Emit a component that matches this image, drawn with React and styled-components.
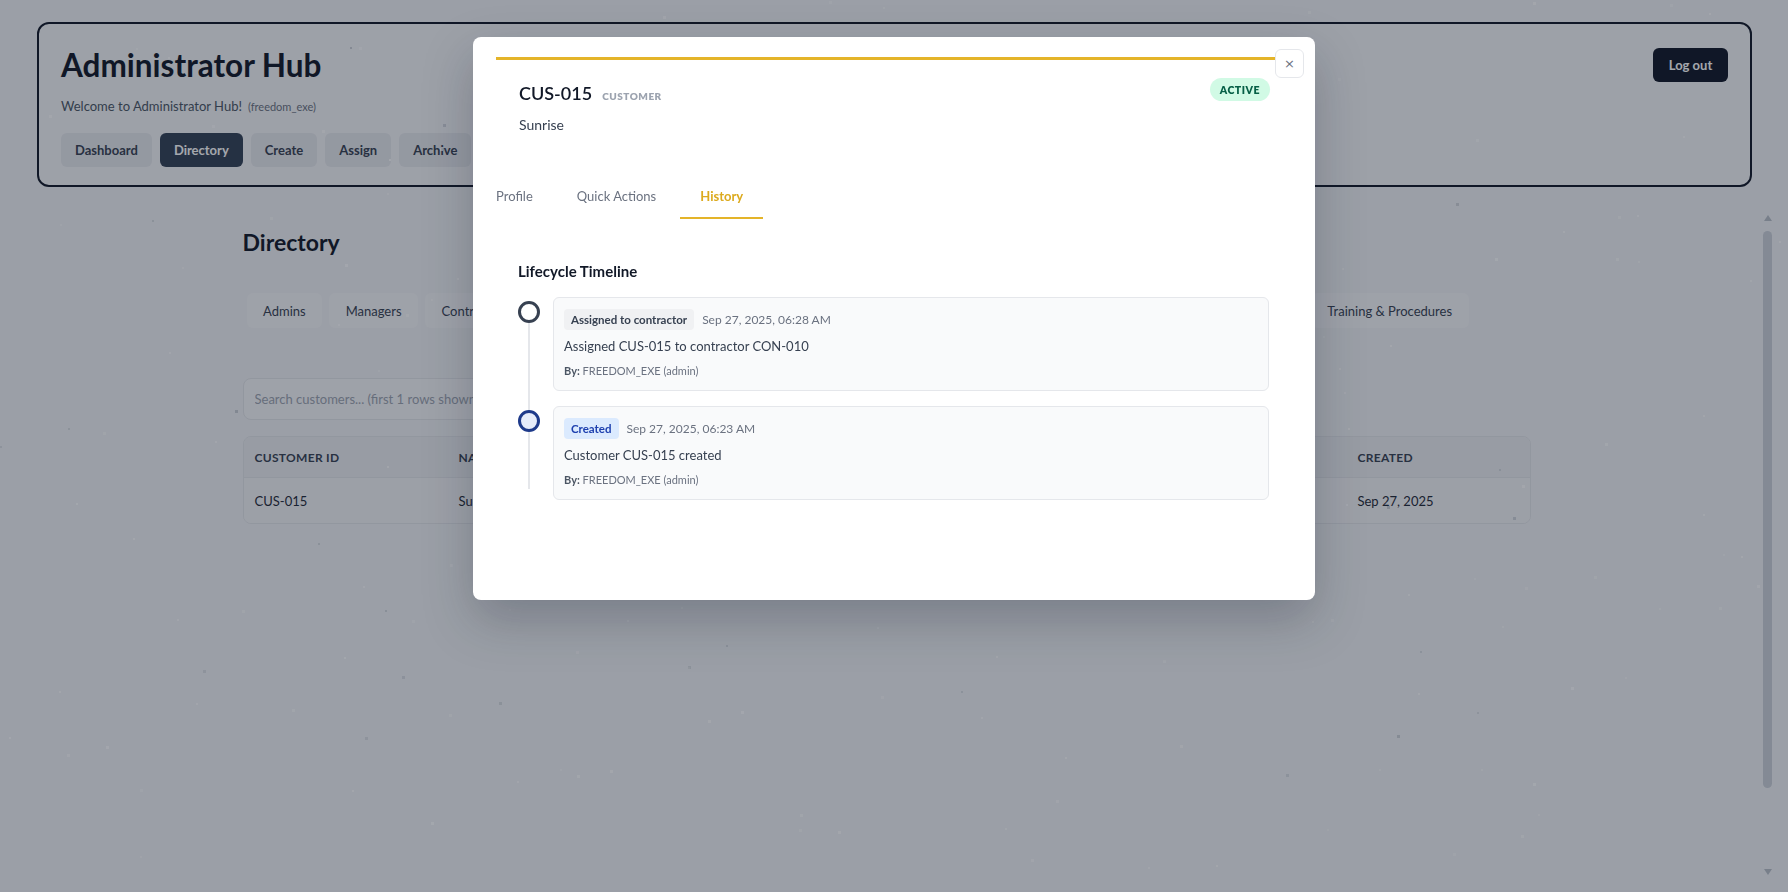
import React from "react";
import styled, { createGlobalStyle, css } from "styled-components";

const GlobalStyle = createGlobalStyle`
  html, body { margin: 0; padding: 0; height: 100%; overflow: hidden; }
  body { font-family: Lato, "Noto Sans", "Liberation Sans", sans-serif; color: #111827; }
  * { box-sizing: border-box; }
`;

/* ---------- page ---------- */
const Page = styled.div`
  height: 100vh;
  display: flex;
  flex-direction: column;
  background: #f1f3f5;
`;

const HeaderCard = styled.header`
  margin: 22px 36px 0 37px;
  border: 2px solid #111827;
  border-radius: 12px;
  padding: 23px 22px 18px 22px;
  display: flex;
  justify-content: space-between;
  align-items: flex-start;
  background: #f4f5f7;
`;

const HeaderLeft = styled.div`
  display: flex;
  flex-direction: column;
`;

const HubTitle = styled.h1`
  margin: 0;
  font-size: 31.5px;
  line-height: 36px;
  font-weight: 700;
  color: #111827;
`;

const Welcome = styled.p`
  margin: 13px 0 0;
  font-size: 13px;
  line-height: 20px;
  color: #4b5563;
`;

const UserTag = styled.span`
  font-size: 11px;
  color: #6b7280;
  margin-left: 6px;
`;

const NavRow = styled.nav`
  display: flex;
  gap: 8px;
  margin-top: 16px;
`;

const NavButton = styled.button`
  height: 34px;
  padding: 0 14px;
  border: none;
  border-radius: 6px;
  font-family: inherit;
  font-size: 13px;
  font-weight: 700;
  background: ${(p) => (p.$active ? "#334155" : "#e6e8ec")};
  color: ${(p) => (p.$active ? "#ffffff" : "#374151")};
`;

const LogoutButton = styled.button`
  height: 34px;
  width: 75px;
  margin-top: 1px;
  border: none;
  border-radius: 6px;
  background: #111827;
  color: #fff;
  font-family: inherit;
  font-size: 13px;
  font-weight: 700;
`;

const Main = styled.div`
  flex: 1;
  min-height: 0;
  margin: 24px 14px 12px 0;
  display: flex;
`;

const ScrollArea = styled.main`
  flex: 1;
  min-width: 0;
  padding-left: 12px;
  overflow: hidden;
`;

const ScrollRail = styled.div`
  width: 13px;
  display: flex;
  flex-direction: column;
  align-items: center;
`;

const RailArrow = styled.span`
  display: block;
  margin: ${(p) => (p.$down ? "auto 0 5px" : "4px 0 0")};
  width: 0;
  height: 0;
  border-left: 4.5px solid transparent;
  border-right: 4.5px solid transparent;
  ${(p) =>
    p.$down
      ? css`border-top: 6px solid #b9bec7;`
      : css`border-bottom: 6px solid #b9bec7;`}
`;

const RailThumb = styled.span`
  display: block;
  margin-top: 10px;
  width: 9px;
  height: 557px;
  border-radius: 5px;
  background: #cbd0d9;
`;

const Content = styled.div`
  max-width: 1288px;
  margin: 0 auto;
  padding-top: 15px;
`;

const SectionTitle = styled.h2`
  margin: 0;
  font-size: 23px;
  line-height: 32px;
  font-weight: 700;
  color: #111827;
`;

const FilterRow = styled.div`
  display: flex;
  gap: 7px;
  margin-top: 35px;
  padding-left: 4px;
`;

const FilterTab = styled.button`
  height: 35px;
  padding: 0 16.5px;
  border: none;
  border-radius: 6px;
  font-family: inherit;
  font-size: 13px;
  white-space: nowrap;
  background: ${(p) => (p.$active ? "#1f2937" : "#f6f7f9")};
  color: ${(p) => (p.$active ? "#fff" : "#374151")};
`;

const SearchInput = styled.input`
  display: block;
  margin-top: 50px;
  width: 560px;
  height: 42px;
  padding: 0 11px;
  border: 1px solid #e3e5e9;
  border-radius: 8px;
  background: #f6f7f9;
  font-family: inherit;
  font-size: 13px;
  &::placeholder { color: #9ca3af; }
`;

const Table = styled.div`
  margin-top: 16px;
  border: 1px solid #e3e5e9;
  border-radius: 8px;
  overflow: hidden;
`;

const TableRow = styled.div`
  display: grid;
  grid-template-columns: 204px 1fr 1fr 1fr 183px;
  align-items: center;
  height: ${(p) => (p.$head ? "40px" : "46px")};
  background: ${(p) => (p.$head ? "#eceef1" : "#f3f4f6")};
  border-top: ${(p) => (p.$head ? "none" : "1px solid #e3e5e9")};
`;

const Cell = styled.div`
  padding: 0 11px;
  ${(p) =>
    p.$head
      ? css`
          font-size: 12px;
          font-weight: 700;
          letter-spacing: 0.3px;
          text-transform: uppercase;
          color: #374151;
        `
      : css`
          font-size: 13px;
          color: #1f2937;
        `}
`;

/* ---------- particles ---------- */
const ParticleLayer = styled.svg`
  position: fixed;
  inset: 0;
  width: 100%;
  height: 100%;
  pointer-events: none;
`;

function makeParticles() {
  let s = 987654;
  const r = () => {
    s = (s * 1664525 + 1013904223) >>> 0;
    return s / 4294967296;
  };
  return Array.from({ length: 200 }, () => {
    const dark = r() < 0.16;
    return {
      x: Math.round(r() * 1788),
      y: Math.round(r() * 892),
      s: r() < 0.5 ? 2 : 3,
      c: dark ? "#475569" : "#ffffff",
      o: dark ? 0.12 + r() * 0.12 : 0.4 + r() * 0.5,
    };
  });
}
const particles = makeParticles();

/* ---------- modal ---------- */
const Overlay = styled.div`
  position: fixed;
  inset: 0;
  background: rgba(17, 24, 39, 0.38);
  display: flex;
  justify-content: center;
  align-items: flex-start;
  padding-top: 37px;
`;

const Modal = styled.div`
  position: relative;
  width: 842px;
  min-height: 559px;
  background: #fff;
  border-radius: 8px;
  padding: 20px 24px 20px 23px;
  box-shadow: 0 20px 50px rgba(15, 23, 42, 0.25);
`;

const CloseButton = styled.button`
  position: absolute;
  top: 12px;
  right: 11px;
  width: 29px;
  height: 29px;
  border: 1px solid #e5e7eb;
  border-radius: 6px;
  background: #fff;
  color: #6b7280;
  font-family: "DejaVu Sans", sans-serif;
  font-size: 13px;
  line-height: 1;
  display: flex;
  align-items: center;
  justify-content: center;
  padding: 0;
`;

const EntityHeader = styled.div`
  border-top: 3px solid #e4b429;
  padding: 18px 21px 20px 23px;
  display: flex;
  justify-content: space-between;
  align-items: flex-start;
`;

const EntityInfo = styled.div`
  padding-top: 3px;
`;

const EntityTitleRow = styled.div`
  display: flex;
  align-items: baseline;
  gap: 10px;
`;

const EntityId = styled.span`
  font-size: 18px;
  line-height: 24px;
  font-weight: 600;
  color: #111827;
`;

const EntityType = styled.span`
  font-size: 10px;
  font-weight: 800;
  letter-spacing: 0.5px;
  color: #9ca3af;
`;

const EntityName = styled.div`
  margin-top: 10px;
  font-size: 14px;
  line-height: 20px;
  color: #374151;
`;

const StatusPill = styled.span`
  display: inline-flex;
  align-items: center;
  height: 23px;
  padding: 0 10px;
  border-radius: 999px;
  background: #d1fae5;
  color: #065f46;
  font-size: 10.5px;
  font-weight: 800;
  letter-spacing: 0.5px;
`;

const Tabs = styled.div`
  display: flex;
  gap: 4px;
  margin: 21px 0 0 -20px;
`;

const Tab = styled.button`
  padding: 10px 20px 11px;
  border: none;
  border-bottom: 2px solid ${(p) => (p.$active ? "#e4b429" : "transparent")};
  background: none;
  font-family: inherit;
  font-size: 13px;
  line-height: 20px;
  font-weight: ${(p) => (p.$active ? 700 : 400)};
  color: ${(p) => (p.$active ? "#dcaa1e" : "#6b7280")};
`;

const Panel = styled.section`
  padding: 41px 22px 80px 22px;
`;

const PanelTitle = styled.h3`
  margin: 0 0 15px;
  font-size: 15px;
  line-height: 22px;
  font-weight: 700;
  color: #111827;
`;

const Timeline = styled.div`
  position: relative;
  display: flex;
  flex-direction: column;
  gap: 15px;
  &::before {
    content: "";
    position: absolute;
    left: 10px;
    top: 26px;
    bottom: 11px;
    width: 2px;
    background: #e5e7eb;
  }
`;

const TimelineItem = styled.div`
  display: grid;
  grid-template-columns: 22px 1fr;
  column-gap: 13px;
  align-items: start;
`;

const Dot = styled.span`
  position: relative;
  margin-top: 4px;
  width: 22px;
  height: 22px;
  border-radius: 50%;
  border: 3px solid ${(p) => (p.$tone === "blue" ? "#1e3a8a" : "#374151")};
  background: ${(p) => (p.$tone === "blue" ? "#e6ecfa" : "#ffffff")};
`;

const EventCard = styled.div`
  background: #f9fafb;
  border: 1px solid #e5e7eb;
  border-radius: 6px;
  padding: 11px 11px 11px 10px;
`;

const EventHead = styled.div`
  display: flex;
  align-items: center;
  gap: 8px;
`;

const EventBadge = styled.span`
  display: inline-flex;
  align-items: center;
  height: 21px;
  padding: 0 7px;
  border-radius: 4px;
  font-size: 11.5px;
  font-weight: 700;
  background: ${(p) => (p.$tone === "blue" ? "#dbeafe" : "#f0f1f3")};
  color: ${(p) => (p.$tone === "blue" ? "#1e40af" : "#374151")};
`;

const EventDate = styled.span`
  font-size: 12px;
  color: #6b7280;
`;

const EventText = styled.div`
  margin-top: 7px;
  font-size: 13px;
  line-height: 19px;
  color: #374151;
`;

const EventBy = styled.div`
  margin-top: 6px;
  font-size: 11px;
  line-height: 17px;
  color: #6b7280;
  strong { color: #4b5563; font-weight: 700; }
`;

const navItems = ["Dashboard", "Directory", "Create", "Assign", "Archive"];
const filterItems = [
  "Admins",
  "Managers",
  "Contractors",
  "Customers",
  "Properties",
  "Work Orders",
  "Schedules",
  "Invoices",
  "Inventory",
  "Equipment",
  "Reports",
  "Training & Procedures",
];

const events = [
  {
    label: "Assigned to contractor",
    date: "Sep 27, 2025, 06:28 AM",
    text: "Assigned CUS-015 to contractor CON-010",
    tone: "gray",
  },
  {
    label: "Created",
    date: "Sep 27, 2025, 06:23 AM",
    text: "Customer CUS-015 created",
    tone: "blue",
  },
];

export default function App() {
  return (
    <>
      <GlobalStyle />
      <Page>
        <HeaderCard>
          <HeaderLeft>
            <HubTitle>Administrator Hub</HubTitle>
            <Welcome>
              Welcome to Administrator Hub!<UserTag>(freedom_exe)</UserTag>
            </Welcome>
            <NavRow>
              {navItems.map((n) => (
                <NavButton key={n} $active={n === "Directory"}>
                  {n}
                </NavButton>
              ))}
            </NavRow>
          </HeaderLeft>
          <LogoutButton>Log out</LogoutButton>
        </HeaderCard>
        <Main>
          <ScrollArea>
            <Content>
              <SectionTitle>Directory</SectionTitle>
              <FilterRow>
                {filterItems.map((f) => (
                  <FilterTab key={f} $active={f === "Customers"}>
                    {f}
                  </FilterTab>
                ))}
              </FilterRow>
              <SearchInput placeholder="Search customers... (first 1 rows shown)" />
              <Table>
                <TableRow $head>
                  <Cell $head>Customer ID</Cell>
                  <Cell $head>Name</Cell>
                  <Cell $head>Contact</Cell>
                  <Cell $head>Contractor</Cell>
                  <Cell $head>Created</Cell>
                </TableRow>
                <TableRow>
                  <Cell>CUS-015</Cell>
                  <Cell>Sunrise</Cell>
                  <Cell>—</Cell>
                  <Cell>CON-010</Cell>
                  <Cell>Sep 27, 2025</Cell>
                </TableRow>
              </Table>
            </Content>
          </ScrollArea>
          <ScrollRail aria-hidden="true">
            <RailArrow />
            <RailThumb />
            <RailArrow $down />
          </ScrollRail>
        </Main>
      </Page>
      <ParticleLayer>
        {particles.map((p, i) => (
          <rect key={i} x={p.x} y={p.y} width={p.s} height={p.s} fill={p.c} opacity={p.o} />
        ))}
      </ParticleLayer>
      <Overlay>
        <Modal>
          <CloseButton aria-label="Close">×</CloseButton>
          <EntityHeader>
            <EntityInfo>
              <EntityTitleRow>
                <EntityId>CUS-015</EntityId>
                <EntityType>CUSTOMER</EntityType>
              </EntityTitleRow>
              <EntityName>Sunrise</EntityName>
            </EntityInfo>
            <StatusPill>ACTIVE</StatusPill>
          </EntityHeader>
          <Tabs>
            <Tab>Profile</Tab>
            <Tab>Quick Actions</Tab>
            <Tab $active>History</Tab>
          </Tabs>
          <Panel>
            <PanelTitle>Lifecycle Timeline</PanelTitle>
            <Timeline>
              {events.map((e) => (
                <TimelineItem key={e.label}>
                  <Dot $tone={e.tone} />
                  <EventCard>
                    <EventHead>
                      <EventBadge $tone={e.tone}>{e.label}</EventBadge>
                      <EventDate>{e.date}</EventDate>
                    </EventHead>
                    <EventText>{e.text}</EventText>
                    <EventBy>
                      <strong>By:</strong> FREEDOM_EXE (admin)
                    </EventBy>
                  </EventCard>
                </TimelineItem>
              ))}
            </Timeline>
          </Panel>
        </Modal>
      </Overlay>
    </>
  );
}
